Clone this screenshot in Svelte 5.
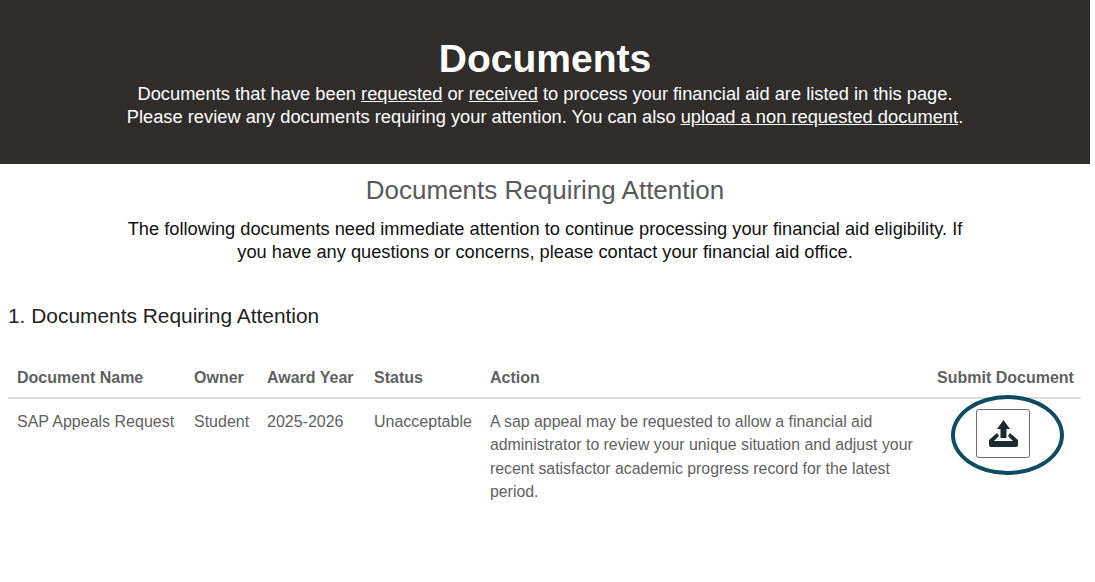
<script lang="ts">
	const rows = [
		{
			name: 'SAP Appeals Request',
			owner: 'Student',
			year: '2025-2026',
			status: 'Unacceptable',
			action:
				'A sap appeal may be requested to allow a financial aid administrator to review your unique situation and adjust your recent satisfactor academic progress record for the latest period.'
		}
	];
</script>

<div class="page">
	<header class="banner">
		<h1>Documents</h1>
		<p>
			Documents that have been <a href="#requested">requested</a> or <a href="#received">received</a> to process your financial aid are listed in this page.<br />
			Please review any documents requiring your attention. You can also <a href="#upload">upload a non requested document</a>.
		</p>
	</header>

	<section class="intro">
		<h2>Documents Requiring Attention</h2>
		<p>
			The following documents need immediate attention to continue processing your financial aid eligibility. If you have any questions or concerns, please contact your financial aid office.
		</p>
	</section>

	<h3>1. Documents Requiring Attention</h3>

	<table>
		<thead>
			<tr>
				<th class="c-name">Document Name</th>
				<th class="c-owner">Owner</th>
				<th class="c-year">Award Year</th>
				<th class="c-status">Status</th>
				<th class="c-action">Action</th>
				<th class="c-submit">Submit Document</th>
			</tr>
		</thead>
		<tbody>
			{#each rows as row}
				<tr>
					<td>{row.name}</td>
					<td>{row.owner}</td>
					<td>{row.year}</td>
					<td>{row.status}</td>
					<td class="action-cell">{row.action}</td>
					<td class="submit-cell">
						<div class="submit-wrap">
							<button class="upload" aria-label="Submit document">
								<svg width="29" height="27" viewBox="0 0 29 27">
									<path d="M14.5 0 L21 9 H17.5 V18 H11.5 V9 H8 Z" fill="#1c2a31" />
									<path d="M8 13 L0 20 V25 Q0 27 2 27 H27 Q29 27 29 25 V20 L21 13 L19 16 L24 21 H5 L10 16 Z" fill="#1c2a31" />
								</svg>
							</button>
							<span class="ring"></span>
						</div>
					</td>
				</tr>
			{/each}
		</tbody>
	</table>
</div>

<style>
	:global(body) {
		margin: 0;
		background: #fff;
		font-family: 'Liberation Sans', Arial, sans-serif;
	}

	.page {
		width: 1095px;
		height: 582px;
		overflow: hidden;
	}

	.banner {
		width: 1090px;
		height: 164px;
		padding-top: 36px;
		box-sizing: border-box;
		background: #312d2b;
		color: #fff;
		text-align: center;
	}

	.banner h1 {
		margin: 0;
		font-size: 39px;
		line-height: 45px;
		font-weight: 700;
	}

	.banner p {
		margin: 1px 0 0;
		font-size: 18.3px;
		line-height: 23px;
	}

	.banner a {
		color: #fff;
		text-decoration: underline;
	}

	.intro {
		width: 1090px;
		text-align: center;
	}

	.intro h2 {
		margin: 10px 0 0;
		font-size: 26px;
		line-height: 32px;
		font-weight: 400;
		color: #58595b;
	}

	.intro p {
		width: 850px;
		margin: 11px auto 0;
		font-size: 18.25px;
		line-height: 23px;
		color: #111;
	}

	h3 {
		margin: 40px 0 0 8px;
		font-size: 20.9px;
		line-height: 26px;
		font-weight: 400;
		color: #222;
	}

	table {
		width: 1073px;
		margin: 39px 0 0 8px;
		border-collapse: collapse;
		table-layout: fixed;
		font-size: 16px;
		color: #5f6062;
	}

	th {
		box-sizing: border-box;
		padding: 0 0 9px 9px;
		border-bottom: 2px solid #ddd;
		text-align: left;
		font-size: 16px;
		line-height: 20px;
		font-weight: 700;
		white-space: nowrap;
	}

	td {
		padding: 11px 0 0 9px;
		vertical-align: top;
		line-height: 23.3px;
	}

	.action-cell {
		padding-right: 10px;
		font-size: 15.85px;
	}

	.c-name { width: 177px; }
	.c-owner { width: 73px; }
	.c-year { width: 107px; }
	.c-status { width: 116px; }
	.c-submit { width: 145px; padding-left: 1px; padding-right: 9px; }

	.submit-cell {
		padding: 10px 0 0;
	}

	.submit-wrap {
		position: relative;
		width: 54px;
		margin-left: 40px;
	}

	.upload {
		display: flex;
		align-items: center;
		justify-content: center;
		width: 54px;
		height: 49px;
		padding: 0;
		background: #fff;
		border: 1px solid #6b6b6b;
		border-radius: 3px;
	}

	.ring {
		position: absolute;
		left: -25px;
		top: -14px;
		width: 105px;
		height: 72px;
		border: 4px solid #0f4c63;
		border-radius: 50%;
		pointer-events: none;
	}
</style>
